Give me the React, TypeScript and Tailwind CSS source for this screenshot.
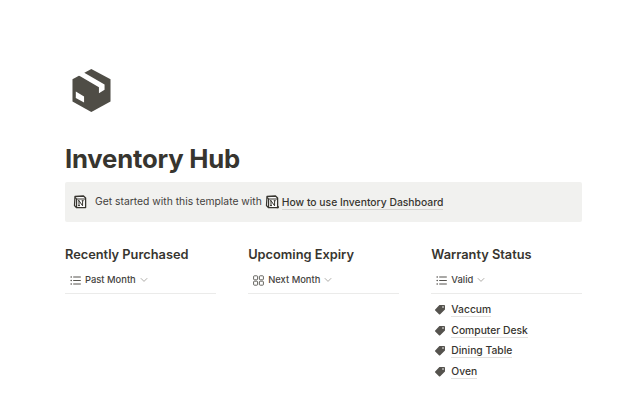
import type { ReactNode } from "react";

function NotionIcon({ small }: { small?: boolean }) {
  return (
    <svg width="14" height="14" viewBox="0 0 14 14" className="shrink-0">
      <path d="M2 1.5 L10.5 1 L12.6 3 V12.6 H3.4 L1.5 10.5 Z" fill="#fff" stroke="#37352f" strokeWidth="1.3" strokeLinejoin="round" />
      <path d="M2 2.5 L3.6 4 H12.2" fill="none" stroke="#37352f" strokeWidth="1.1" />
      <path d="M3.6 4 V12.4" stroke="#37352f" strokeWidth="1.2" />
      <path d="M6 5.7 V10.6 M6 5.7 L9.6 10.8 V5.7 M5 10.6 H7 M8.7 5.7 H10.7 M5 5.7 H6.3" fill="none" stroke="#37352f" strokeWidth="1" />
      {small && <path d="M12 11 L13.6 12.6 M13.6 11 V12.8 H11.8" fill="none" stroke="#37352f" strokeWidth="0.8" />}
    </svg>
  );
}

function ListIcon() {
  return (
    <svg width="11" height="11" viewBox="0 0 11 11" className="shrink-0">
      <g fill="#55534e">
        <circle cx="1.2" cy="2" r="0.8" />
        <circle cx="1.2" cy="5.5" r="0.8" />
        <circle cx="1.2" cy="9" r="0.8" />
        <rect x="3.2" y="1.5" width="7.6" height="1" />
        <rect x="3.2" y="5" width="7.6" height="1" />
        <rect x="3.2" y="8.5" width="7.6" height="1" />
      </g>
    </svg>
  );
}

function GalleryIcon() {
  return (
    <svg width="11" height="11" viewBox="0 0 11 11" className="shrink-0" fill="none" stroke="#55534e" strokeWidth="0.9">
      <rect x="0.6" y="0.8" width="4" height="4" rx="0.8" />
      <rect x="6.4" y="0.8" width="4" height="4" rx="0.8" />
      <rect x="0.6" y="6.2" width="4" height="4" rx="0.8" />
      <rect x="6.4" y="6.2" width="4" height="4" rx="0.8" />
    </svg>
  );
}

function Chevron() {
  return (
    <svg width="8" height="6" viewBox="0 0 8 6" className="shrink-0" fill="none" stroke="#a5a39e" strokeWidth="0.9">
      <path d="M0.8 1.2 L4 4.4 L7.2 1.2" />
    </svg>
  );
}

function TagIcon() {
  return (
    <svg width="12" height="11" viewBox="0 0 12 11" className="shrink-0">
      <path d="M5.4 1 H10.2 Q11 1 11 1.8 V5.4 L6.2 10.2 Q5.6 10.8 5 10.2 L1.2 6.6 Q0.6 6 1.2 5.4 Z" fill="#55534e" />
      <circle cx="9" cy="3" r="0.8" fill="#fff" />
    </svg>
  );
}

function ViewTab({ icon, label }: { icon: ReactNode; label: string }) {
  return (
    <div className="flex h-[26px] items-center border-b border-[#ebebea] pl-[5px]">
      <div className="flex items-center gap-[3px]">
        {icon}
        <span className="ml-[1px] text-[9.4px] font-medium text-[#44423d]">{label}</span>
        <span className="ml-[1px]">
          <Chevron />
        </span>
      </div>
    </div>
  );
}

function Column({ title, icon, label, children }: { title: string; icon: ReactNode; label: string; children?: ReactNode }) {
  return (
    <div className="w-[151px]">
      <h3 className="text-[12.8px] leading-[20px] font-semibold text-[#37352f]">{title}</h3>
      <div className="mt-[3px]">
        <ViewTab icon={icon} label={label} />
      </div>
      {children}
    </div>
  );
}

const items = ["Vaccum", "Computer Desk", "Dining Table", "Oven"];

export default function App() {
  return (
    <div className="h-[400px] w-[640px] overflow-hidden bg-white pl-[65px] pr-[58px] pt-[69px] font-['Inter',sans-serif]">
      {/* page icon */}
      <div className="ml-[7px] h-[43px]">
        <svg width="39" height="43" viewBox="68 57 115 130" className="block">
          <path d="M68 88 L125 57 L183 88 V155 L125 187 L68 155 Z" fill="#4f4d46" />
          <path d="M86 76 L101 67 L165 104 V120 L148 130 V112 Z" fill="#fff" />
          <path d="M78 125 L103 140 V158 L78 145 Z" fill="#fff" />
        </svg>
      </div>

      <h1 className="mt-[31px] text-[25.7px] leading-[32px] font-bold tracking-[-0.2px] text-[#37352f]">Inventory Hub</h1>

      <div className="mt-[7px] flex h-[40px] items-center rounded-[2px] bg-[#f1f1ef] pl-[8px] text-[10.35px] text-[#37352f]">
        <NotionIcon />
        <span className="ml-[8px] text-[#44423d]">Get started with this template with</span>
        <span className="ml-[3px]">
          <NotionIcon small />
        </span>
        <span className="ml-[3px] border-b border-[#d5d4d1] font-medium leading-[14px]">How to use Inventory Dashboard</span>
      </div>

      <div className="mt-[23px] flex gap-[32.5px]">
        <Column title="Recently Purchased" icon={<ListIcon />} label="Past Month" />
        <Column title="Upcoming Expiry" icon={<GalleryIcon />} label="Next Month" />
        <Column title="Warranty Status" icon={<ListIcon />} label="Valid">
          <ul className="mt-[5px] flex flex-col">
            {items.map((item) => (
              <li key={item} className="flex h-[20.7px] items-center pl-[3px]">
                <TagIcon />
                <span className="ml-[5px] border-b border-[#e3e2e0] text-[10.3px] leading-[14px] font-medium text-[#37352f]">{item}</span>
              </li>
            ))}
          </ul>
        </Column>
      </div>
    </div>
  );
}
